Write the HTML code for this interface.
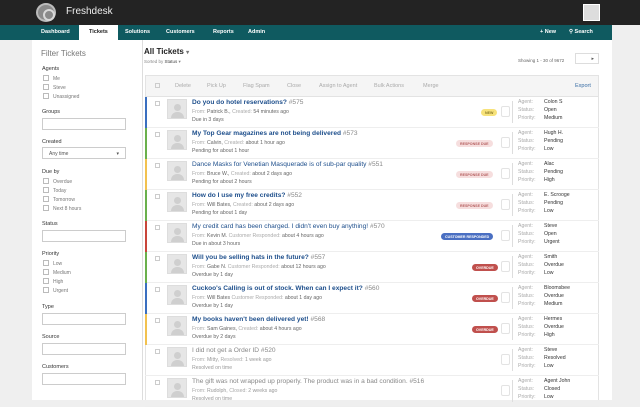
<!DOCTYPE html>
<html><head><meta charset="utf-8"><style>
*{margin:0;padding:0;box-sizing:border-box}
body{width:640px;height:400px;overflow:hidden;background:#efefef;font-family:"Liberation Sans",sans-serif;position:relative}
.top{position:absolute;left:0;top:0;width:640px;height:25px;background:#232323}
.logo{position:absolute;left:36px;top:3px;width:20px;height:19px;border-radius:50%;background:#8a8a8a;border:2px solid #bbb}
.logo:after{content:"";position:absolute;left:5px;top:4px;width:8px;height:8px;border-radius:50%;border:2px solid #d8d8d8}
.brand{position:absolute;left:66px;top:6px;color:#eee;font-size:10px}
.av{position:absolute;left:583px;top:4px;width:17px;height:17px;background:#ddd;border:1px solid #fff}
.nav{position:absolute;left:0;top:25px;width:612px;height:15px;background:#0f5a60}
.nav span{position:absolute;top:4px;color:#fff;font-size:5.5px;font-weight:bold}
.nav .act{background:#fff;color:#222;top:0;height:15px;padding:4px 10px 0}
.main{position:absolute;left:32px;top:40px;width:580px;height:360px;background:#fff}
.side{position:absolute;left:32px;top:40px;width:111px;height:360px;border-right:1px solid #ddd}
.side .h{position:absolute;left:9px;top:9px;font-size:8px;color:#777}
.lbl{position:absolute;left:10px;font-size:5.5px;color:#333}
.cb{position:absolute;left:11px;font-size:5px;color:#777}
.cb:before{content:"";display:inline-block;width:4px;height:4px;border:1px solid #bbb;margin-right:4px;vertical-align:-1px}
.inp{position:absolute;left:10px;width:84px;height:12px;border:1px solid #ccc;background:#fff;font-size:5px;color:#555;padding:3px 6px}
.title{position:absolute;left:144px;top:47px;font-size:8px;font-weight:bold;color:#222}
.sub{position:absolute;left:144px;top:59px;font-size:4.5px;color:#888}
.show{position:absolute;left:518px;top:58px;font-size:4.5px;color:#666}
.pg{position:absolute;left:575px;top:53px;width:24px;height:11px;border:1px solid #ddd;font-size:5px;color:#555;text-align:right;padding:2px 4px}
.panel{position:absolute;left:145px;top:75px;width:454px;height:325px;border:1px solid #e3e3e3;border-bottom:none}
.tb{position:absolute;left:145px;top:75px;width:454px;height:22px;background:#f5f5f5;border:1px solid #e3e3e3}
.tb span{position:absolute;top:7px;font-size:5.5px;color:#aaa}
.tb .exp{color:#3b6fa6}
.row{position:absolute;left:145px;width:454px;height:31px;border-bottom:1px solid #eee}
.bar{position:absolute;left:0;top:0;width:2px;height:31px}
.rcb{position:absolute;left:10px;top:4px;width:5px;height:5px;border:1px solid #ccc}
.ra{position:absolute;left:22px;top:2px;width:20px;height:20px;background:#e6e6e6;border:1px solid #ddd;overflow:hidden}
.ra:before{content:"";position:absolute;left:6px;top:4px;width:7px;height:7px;border-radius:50%;background:#cfcfcf}
.ra:after{content:"";position:absolute;left:3px;top:12px;width:13px;height:10px;border-radius:6px 6px 0 0;background:#cfcfcf}
.rt{position:absolute;left:47px;top:2px;font-size:6.6px;color:#1e4f8c;white-space:nowrap}
.rt b{font-weight:bold}.rt i{font-style:normal;color:#888}
.rt.g{color:#888}
.rm{position:absolute;left:47px;top:11.5px;font-size:5.2px;color:#666;white-space:nowrap}
.rm em{font-style:normal;color:#aaa}
.rs{position:absolute;left:47px;top:20px;font-size:5.2px;color:#666}
.badge{position:absolute;top:12px;font-size:3.6px;font-weight:bold;padding:1.5px 4px;border-radius:4px;color:#fff}
.ln{position:absolute;left:367px;top:4px;width:1px;height:22px;background:#ddd}
.ic{position:absolute;left:356px;top:9px;width:9px;height:11px;border:1px solid #e3e3e3;border-radius:2px}
.ag{position:absolute;left:373px;top:1px;font-size:5.2px;line-height:8px;color:#aaa}
.vv{position:absolute;left:399px;top:1px;font-size:5.2px;line-height:8px;color:#333}
</style></head><body>
<div class="top"><div class="logo"></div><div class="brand">Freshdesk</div><div class="av"></div></div>
<div class="nav">
<span style="left:41px">Dashboard</span>
<span class="act" style="left:79px">Tickets</span>
<span style="left:125px">Solutions</span>
<span style="left:166px">Customers</span>
<span style="left:213px">Reports</span>
<span style="left:248px">Admin</span>
<span style="left:540px">+ New</span>
<span style="left:569px">&#9906; Search</span>
</div>
<div class="main"></div>
<div class="side">
<div class="h">Filter Tickets</div>
<div class="lbl" style="top:26px">Agents</div>
<div class="cb" style="top:35px">Me</div><div class="cb" style="top:44px">Steve</div><div class="cb" style="top:53px">Unassigned</div>
<div class="lbl" style="top:69px">Groups</div><div class="inp" style="top:78px"></div>
<div class="lbl" style="top:99px">Created</div><div class="inp" style="top:107px">Any time<span style="float:right">&#9662;</span></div>
<div class="lbl" style="top:129px">Due by</div>
<div class="cb" style="top:138px">Overdue</div><div class="cb" style="top:147px">Today</div><div class="cb" style="top:156px">Tomorrow</div><div class="cb" style="top:165px">Next 8 hours</div>
<div class="lbl" style="top:181px">Status</div><div class="inp" style="top:190px"></div>
<div class="lbl" style="top:211px">Priority</div>
<div class="cb" style="top:220px">Low</div><div class="cb" style="top:229px">Medium</div><div class="cb" style="top:238px">High</div><div class="cb" style="top:247px">Urgent</div>
<div class="lbl" style="top:264px">Type</div><div class="inp" style="top:273px"></div>
<div class="lbl" style="top:294px">Source</div><div class="inp" style="top:303px"></div>
<div class="lbl" style="top:324px">Customers</div><div class="inp" style="top:333px"></div>
</div>
<div class="title">All Tickets <span style="font-size:6px;color:#777">&#9662;</span></div>
<div class="sub">Sorted by <span style="color:#444">Status</span> &#9662;</div>
<div class="show">Showing 1 - 30 of 9672</div>
<div class="pg">&#9656;</div>
<div class="panel"></div>
<div class="tb">
<span style="left:9px;top:7px;width:5px;height:5px;border:1px solid #ccc"></span>
<span style="left:29px">Delete</span><span style="left:61px">Pick Up</span><span style="left:97px">Flag Spam</span><span style="left:141px">Close</span><span style="left:173px">Assign to Agent</span><span style="left:228px">Bulk Actions</span><span style="left:277px">Merge</span><span class="exp" style="left:429px">Export</span>
</div>

<div class="row" style="top:97px"><div class="bar" style="background:#3a6fc0"></div><div class="rcb"></div><div class="ra"></div>
<div class="rt"><b>Do you do hotel reservations?</b> <i>#575</i></div><div class="rm"><em>From:</em> Patrick B., <em>Created:</em> 54 minutes ago</div><div class="rs">Due in 3 days</div>
<div class="badge" style="left:336px;background:#f7e27a;color:#8a7a2a">NEW</div><div class="ic"></div><div class="ln"></div>
<div class="ag">Agent:<br>Status:<br>Priority:</div><div class="vv">Colon S<br>Open<br>Medium</div></div>

<div class="row" style="top:128px"><div class="bar" style="background:#6ab04c"></div><div class="rcb"></div><div class="ra"></div>
<div class="rt"><b>My Top Gear magazines are not being delivered</b> <i>#573</i></div><div class="rm"><em>From:</em> Calvin, <em>Created:</em> about 1 hour ago</div><div class="rs">Pending for about 1 hour</div>
<div class="badge" style="left:311px;background:#f6dede;color:#b56060">RESPONSE DUE</div><div class="ic"></div><div class="ln"></div>
<div class="ag">Agent:<br>Status:<br>Priority:</div><div class="vv">Hugh H.<br>Pending<br>Low</div></div>

<div class="row" style="top:159px"><div class="bar" style="background:#f2c14e"></div><div class="rcb"></div><div class="ra"></div>
<div class="rt">Dance Masks for Venetian Masquerade is of sub-par quality <i>#551</i></div><div class="rm"><em>From:</em> Bruce W., <em>Created:</em> about 2 days ago</div><div class="rs">Pending for about 2 hours</div>
<div class="badge" style="left:311px;background:#f6dede;color:#b56060">RESPONSE DUE</div><div class="ic"></div><div class="ln"></div>
<div class="ag">Agent:<br>Status:<br>Priority:</div><div class="vv">Alac<br>Pending<br>High</div></div>

<div class="row" style="top:190px"><div class="bar" style="background:#6ab04c"></div><div class="rcb"></div><div class="ra"></div>
<div class="rt"><b>How do I use my free credits?</b> <i>#552</i></div><div class="rm"><em>From:</em> Will Bates, <em>Created:</em> about 2 days ago</div><div class="rs">Pending for about 1 day</div>
<div class="badge" style="left:311px;background:#f6dede;color:#b56060">RESPONSE DUE</div><div class="ic"></div><div class="ln"></div>
<div class="ag">Agent:<br>Status:<br>Priority:</div><div class="vv">E. Scrooge<br>Pending<br>Low</div></div>

<div class="row" style="top:221px"><div class="bar" style="background:#c9453a"></div><div class="rcb"></div><div class="ra"></div>
<div class="rt">My credit card has been charged. I didn't even buy anything! <i>#570</i></div><div class="rm"><em>From:</em> Kevin M. <em>Customer Responded:</em> about 4 hours ago</div><div class="rs">Due in about 3 hours</div>
<div class="badge" style="left:296px;background:#4a6fc2">CUSTOMER RESPONDED</div><div class="ic"></div><div class="ln"></div>
<div class="ag">Agent:<br>Status:<br>Priority:</div><div class="vv">Steve<br>Open<br>Urgent</div></div>

<div class="row" style="top:252px"><div class="bar" style="background:#6ab04c"></div><div class="rcb"></div><div class="ra"></div>
<div class="rt"><b>Will you be selling hats in the future?</b> <i>#557</i></div><div class="rm"><em>From:</em> Gabe N. <em>Customer Responded:</em> about 12 hours ago</div><div class="rs">Overdue by 1 day</div>
<div class="badge" style="left:327px;background:#c0504d">OVERDUE</div><div class="ic"></div><div class="ln"></div>
<div class="ag">Agent:<br>Status:<br>Priority:</div><div class="vv">Smith<br>Overdue<br>Low</div></div>

<div class="row" style="top:283px"><div class="bar" style="background:#3a6fc0"></div><div class="rcb"></div><div class="ra"></div>
<div class="rt"><b>Cuckoo's Calling is out of stock. When can I expect it?</b> <i>#560</i></div><div class="rm"><em>From:</em> Will Bates <em>Customer Responded:</em> about 1 day ago</div><div class="rs">Overdue by 1 day</div>
<div class="badge" style="left:327px;background:#c0504d">OVERDUE</div><div class="ic"></div><div class="ln"></div>
<div class="ag">Agent:<br>Status:<br>Priority:</div><div class="vv">Bloomsbee<br>Overdue<br>Medium</div></div>

<div class="row" style="top:314px"><div class="bar" style="background:#f2c14e"></div><div class="rcb"></div><div class="ra"></div>
<div class="rt"><b>My books haven't been delivered yet!</b> <i>#568</i></div><div class="rm"><em>From:</em> Sam Gaines, <em>Created:</em> about 4 hours ago</div><div class="rs">Overdue by 2 days</div>
<div class="badge" style="left:327px;background:#c0504d">OVERDUE</div><div class="ic"></div><div class="ln"></div>
<div class="ag">Agent:<br>Status:<br>Priority:</div><div class="vv">Hermes<br>Overdue<br>High</div></div>

<div class="row" style="top:345px"><div class="rcb"></div><div class="ra"></div>
<div class="rt g">I did not get a Order ID #520</div><div class="rm" style="color:#999"><em>From:</em> Mitty, <em>Resolved:</em> 1 week ago</div><div class="rs" style="color:#999">Resolved on time</div>
<div class="ic"></div><div class="ln"></div>
<div class="ag">Agent:<br>Status:<br>Priority:</div><div class="vv">Steve<br>Resolved<br>Low</div></div>

<div class="row" style="top:376px"><div class="rcb"></div><div class="ra"></div>
<div class="rt g">The gift was not wrapped up properly. The product was in a bad condition. #516</div><div class="rm" style="color:#999"><em>From:</em> Rudolph, <em>Closed:</em> 2 weeks ago</div><div class="rs" style="color:#999">Resolved on time</div>
<div class="ic"></div><div class="ln"></div>
<div class="ag">Agent:<br>Status:<br>Priority:</div><div class="vv">Agent John<br>Closed<br>Low</div></div>
</body></html>
